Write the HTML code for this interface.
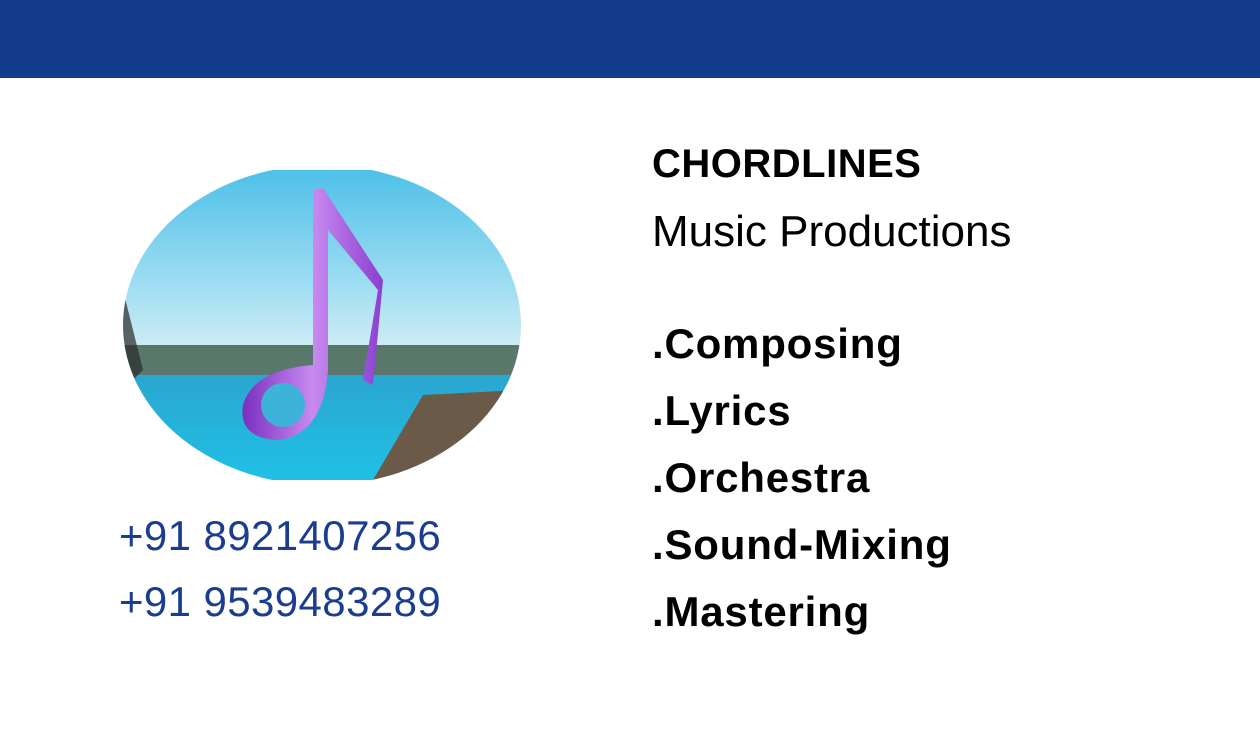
<!DOCTYPE html>
<html><head><meta charset="utf-8"><style>
body{margin:0;width:1260px;height:756px;background:#fff;position:relative;overflow:hidden;font-family:"Liberation Sans",sans-serif}
.bar{position:absolute;left:0;top:0;width:1260px;height:78px;background:#143c8d}
.t{position:absolute;white-space:nowrap;line-height:1}
.b{font-weight:bold;color:#000}
.ph{color:#1a3d8f;font-size:42px;left:119px;letter-spacing:.4px}
.li{font-size:42px;left:652px;letter-spacing:.8px}
</style></head><body>
<div class="bar"></div>
<svg style="position:absolute;left:123px;top:170px" width="398" height="310" viewBox="0 0 398 310">
<defs>
<clipPath id="c"><ellipse cx="199" cy="155" rx="199" ry="160"/></clipPath>
<linearGradient id="sky" x1="0" y1="0" x2="0" y2="1">
<stop offset="0" stop-color="#4fc0e8"/><stop offset=".35" stop-color="#9adcf2"/><stop offset=".6" stop-color="#d6eef4"/><stop offset="1" stop-color="#cfe6ea"/></linearGradient>
<linearGradient id="w" x1="0" y1="0" x2="0" y2="1">
<stop offset="0" stop-color="#2aa6d0"/><stop offset="1" stop-color="#1fc0e6"/></linearGradient>
<linearGradient id="n" x1="0" y1="0" x2="1" y2="0"><stop offset="0" stop-color="#7a2fc0"/><stop offset=".5" stop-color="#c88af0"/><stop offset="1" stop-color="#8a3fd0"/></linearGradient>
</defs>
<g clip-path="url(#c)">
<rect width="398" height="310" fill="url(#sky)"/>
<rect y="175" width="398" height="40" fill="#3a5a48" opacity=".8"/>
<rect y="205" width="398" height="105" fill="url(#w)"/>
<path d="M250 310 L300 225 L398 220 L398 310Z" fill="#6b5a48"/>
<path d="M0 120 L20 200 L0 220Z" fill="#2a2a2a" opacity=".7"/>
<path d="M185 20 L200 18 L260 110 L250 215 L240 210 L255 120 L205 60 L205 200 Q200 265 155 270 Q115 268 120 235 Q130 200 190 195 L190 20Z" fill="url(#n)"/>
<ellipse cx="160" cy="235" rx="22" ry="22" fill="#3db3da"/>
</g></svg>
<div class="t ph" style="top:515px">+91 8921407256</div>
<div class="t ph" style="top:581px">+91 9539483289</div>
<div class="t b" style="left:652px;top:144px;font-size:40px;letter-spacing:.5px">CHORDLINES</div>
<div class="t" style="left:652px;top:210px;font-size:44px;color:#000">Music Productions</div>
<div class="t b li" style="top:323px">.Composing</div>
<div class="t b li" style="top:390px">.Lyrics</div>
<div class="t b li" style="top:457px">.Orchestra</div>
<div class="t b li" style="top:524px">.Sound-Mixing</div>
<div class="t b li" style="top:591px">.Mastering</div>
</body></html>
